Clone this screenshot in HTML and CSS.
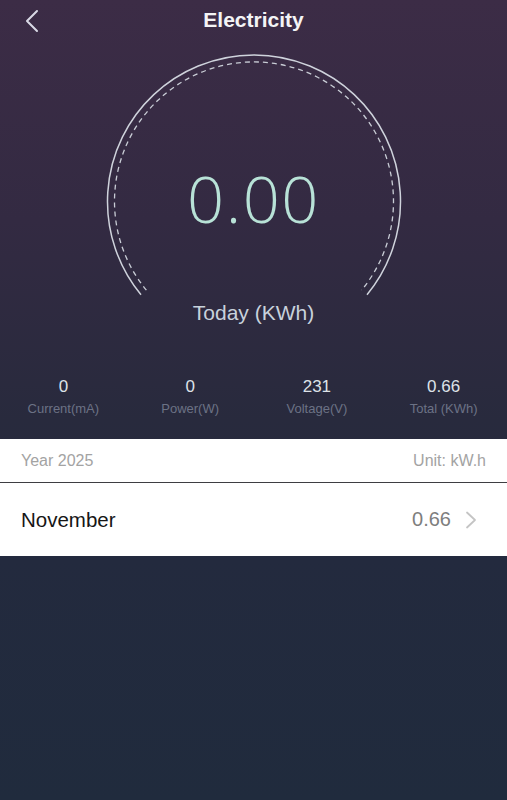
FILE: index.html
```html
<!DOCTYPE html>
<html lang="en">
  <head>
    <meta charset="UTF-8" />
    <title>Electricity</title>
    <meta name="viewport" content="width=device-width, initial-scale=1.0" />
    <link rel="stylesheet" href="styles.css">
  </head>
  <body>
    <div class="page">
      <div class="header">
        <button class="back-btn" aria-label="Back">
          <svg width="14" height="24" viewBox="0 0 14 24">
            <path d="M12 2 L2 12 L12 22" fill="none" stroke="#d9d9e6" stroke-width="2" stroke-linecap="round" stroke-linejoin="round" />
          </svg>
        </button>
        <h1>Electricity</h1>
        <span></span>
      </div>

      <div class="gauge">
        <svg class="gauge-arc" width="300" height="250" viewBox="0 0 300 250">
          <path d="M37 244.7 A146.5 146.5 0 1 1 263 244.7" fill="none" stroke="#cfd3dc" stroke-width="1.5" />
          <path d="M42.4 240.2 A139.5 139.5 0 1 1 257.6 240.2" fill="none" stroke="#c9cdd6" stroke-width="1.3" stroke-dasharray="5 4" />
        </svg>
        <div class="gauge-value">0.00</div>
      </div>
      <div class="gauge-label">Today (KWh)</div>

      <div class="stats">
        <div class="stat">
          <div class="stat-value">0</div>
          <div class="stat-label">Current(mA)</div>
        </div>
        <div class="stat">
          <div class="stat-value">0</div>
          <div class="stat-label">Power(W)</div>
        </div>
        <div class="stat">
          <div class="stat-value">231</div>
          <div class="stat-label">Voltage(V)</div>
        </div>
        <div class="stat">
          <div class="stat-value">0.66</div>
          <div class="stat-label">Total (KWh)</div>
        </div>
      </div>

      <div class="history">
        <div class="history-head">
          <span>Year 2025</span>
          <span>Unit: kW.h</span>
        </div>
        <div class="month-row">
          <span class="month-name">November</span>
          <span class="month-value">
            0.66
            <svg width="12" height="18" viewBox="0 0 12 18">
              <path d="M2 1.5 L10 9 L2 16.5" fill="none" stroke="#c4c4c4" stroke-width="1.8" stroke-linecap="round" stroke-linejoin="round" />
            </svg>
          </span>
        </div>
      </div>
    </div>
  </body>
</html>
```

FILE: styles.css
```css
* {
  box-sizing: border-box;
  font-family: "Liberation Sans", Arial, sans-serif;
}

body {
  margin: 0;
  min-height: 100vh;
  background: linear-gradient(180deg, #3c2c46 0, #332a42 220px, #282a3d 420px, #232a3e 560px, #202b3d 800px);
}

.page {
  display: flex;
  flex-direction: column;
  width: 100%;
}

.header {
  display: grid;
  grid-template-columns: 60px 1fr 60px;
  align-items: center;
  height: 40px;
}

.back-btn {
  background: none;
  border: none;
  padding: 0 0 0 25px;
  margin-top: 1px;
  display: flex;
  align-items: center;
  cursor: pointer;
}

.header h1 {
  margin: 0;
  text-align: center;
  font-size: 21px;
  font-weight: bold;
  color: #f4f4f6;
}

.gauge {
  display: grid;
  justify-items: center;
  margin-top: 10px;
  height: 250px;
}

.gauge-arc,
.gauge-value {
  grid-area: 1 / 1;
}

.gauge-value {
  margin-top: 108px;
  font-family: "Open Sans", sans-serif;
  font-weight: 300;
  font-size: 65px;
  line-height: 80px;
  color: #b8e2d7;
  letter-spacing: 1.5px;
}

.gauge-label {
  margin-top: 1px;
  text-align: center;
  font-size: 21px;
  line-height: 24px;
  color: #c8d2dc;
}

.stats {
  display: grid;
  grid-template-columns: repeat(4, 1fr);
  margin-top: 52px;
  text-align: center;
}

.stat-value {
  font-size: 17px;
  line-height: 20px;
  color: #dde2e8;
}

.stat-label {
  margin-top: 4px;
  font-size: 13px;
  line-height: 16px;
  color: #6c7285;
}

.history {
  margin-top: 22px;
  background-color: white;
}

.history-head {
  display: flex;
  justify-content: space-between;
  align-items: center;
  height: 44px;
  padding: 0 21px;
  font-size: 16px;
  color: #a3a3a3;
  border-bottom: 1px solid #3e3e42;
}

.month-row {
  display: flex;
  justify-content: space-between;
  align-items: center;
  height: 73px;
  padding: 0 30px 0 21px;
}

.month-name {
  font-size: 20.5px;
  color: #161616;
}

.month-value {
  display: flex;
  align-items: center;
  gap: 14px;
  font-size: 20px;
  color: #7e7e7e;
}
```
